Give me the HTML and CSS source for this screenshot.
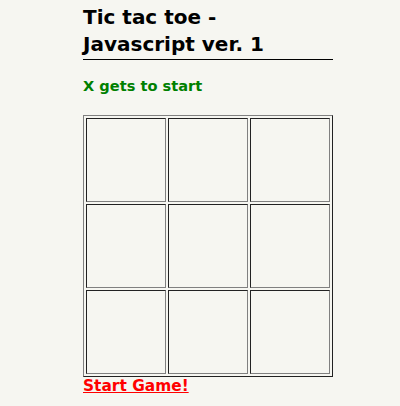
FILE: index.html
```html
<!DOCTYPE html>
<html>
<head>
<meta charset="utf-8">
<link rel="stylesheet" href="styles.css">
</head>
<body>
<div class="wrap">
  <h1 class="title">Tic tac toe - Javascript ver. 1</h1>
  <p class="status">X gets to start</p>
  <table class="board">
    <tr><td></td><td></td><td></td></tr>
    <tr><td></td><td></td><td></td></tr>
    <tr><td></td><td></td><td></td></tr>
  </table>
  <a class="start" href="#">Start Game!</a>
</div>
</body>
</html>
```
FILE: styles.css
```css
html, body {
  margin: 0;
  padding: 0;
  background: #f6f6f1;
}
.wrap {
  width: 250px;
  margin-left: 83px;
  padding-top: 4px;
  font-family: "DejaVu Sans", sans-serif;
  font-weight: bold;
}
.title {
  margin: 0;
  font-size: 20px;
  line-height: 27px;
  padding-bottom: 1px;
  border-bottom: 1px solid #000;
  color: #000;
}
.status {
  margin: 17px 0 0;
  font-size: 14.6px;
  line-height: 18px;
  color: #008000;
}
.board {
  margin-top: 20px;
  border-collapse: separate;
  border-spacing: 2px;
  border: 1px solid;
  border-color: #808080 #222 #222 #808080;
}
.board td {
  width: 78px;
  height: 82px;
  padding: 0;
  border: 1px solid;
  border-color: #222 #808080 #808080 #222;
}
.start {
  display: block;
  font-size: 15.4px;
  line-height: 18px;
  color: #ff0000;
  text-decoration: underline;
}
```
